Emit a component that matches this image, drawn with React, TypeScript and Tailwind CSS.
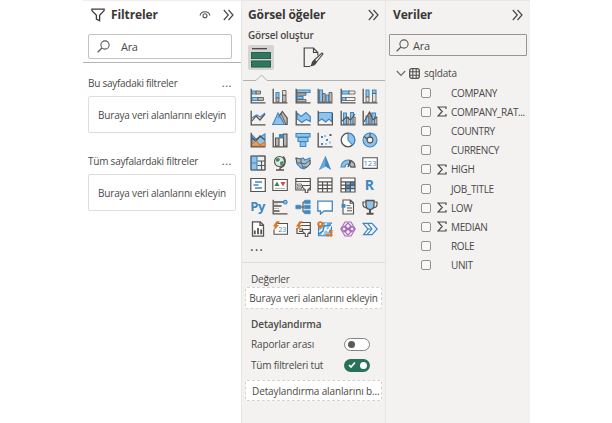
import type { ReactNode } from "react";

const K = "#55524f";
const B = "#3f87c0";
const L = "#8fc3ec";
const G = "#b9b7b4";
const O = "#d9782a";

function Icon({ children, w = 16, h = 16 }: { children: ReactNode; w?: number; h?: number }) {
  return (
    <svg width={w} height={h} viewBox={`0 0 ${w} ${h}`} fill="none" strokeWidth="1.1" className="shrink-0">
      {children}
    </svg>
  );
}

const Axes = () => <path d="M1.2 .8V14.8H15.5" stroke={K} strokeWidth="1.3" />;
const Table = ({ blue = false }: { blue?: boolean }) => (
  <>
    <path d="M1 1h14v14H1z" fill="#fff" />
    {blue && <path d="M5.5 5H15v6.5h-4V15H5.5z" fill={L} />}
    {blue && <path d="M10.5 5H15v3.5h-4.5zM5.5 8.5h5V12h-5z" fill={B} />}
    <path d="M1 1h14v14H1zM1 4.8h14M1 8.2h14M1 11.6h14M5.6 4.8V15M10.3 4.8V15" stroke={K} strokeWidth="1.2" />
  </>
);
const Bolt = () => <path d="M4.5.2 1 5.6h2L.8 10.5 7.2 4H4.8L8 .2z" fill={O} />;
const Funnel = () => <path d="M7.5 8.5h8v1.8L12.8 13v2.8h-2.5V13L7.5 10.3z" fill="#f3f2f1" stroke={K} />;

const visuals: ReactNode[] = [
  <><path d="M2 3h4v3H2zM2 9.5h6v3H2z" fill={L} stroke={B} /><path d="M6 3h4.5v3H6zM8 9.5h5.5v3H8z" fill={G} stroke={K} strokeWidth=".8" /><Axes /></>,
  <><path d="M4 4.5h3V10H4z" fill={L} stroke={B} /><path d="M4 10h3v4H4zM10.5 7h3.5v7h-3.5z" fill={G} stroke={K} strokeWidth=".8" /><path d="M10.5 2.5H14V7h-3.5z" fill="#e4e2e0" stroke={K} strokeWidth=".8" /><Axes /></>,
  <><path d="M2 2h13v2.5H2zM2 8.5h6V11H2z" fill={L} stroke={B} /><path d="M2 5h9v2.3H2zM2 11.5h9v2.3H2z" fill={G} stroke={K} strokeWidth=".8" /><Axes /></>,
  <><path d="M2.5 2h3v12h-3zM9 7h3v7H9z" fill={L} stroke={B} /><path d="M5.7 5.5h2.5V14H5.7zM12 4.5h3V14h-3z" fill={G} stroke={K} strokeWidth=".8" /><Axes /></>,
  <><path d="M2 3h7v3H2zM2 9.5h4v3H2z" fill={L} stroke={B} /><path d="M9 3h6v3H9zM6 9.5h9v3H6z" fill="#f3f2f1" stroke={K} strokeWidth=".8" /><Axes /></>,
  <><path d="M4 2h3v7H4zM10.5 2h3.5v3.5h-3.5z" fill={L} stroke={B} /><path d="M4 9h3v5H4zM10.5 5.5H14V14h-3.5z" fill="#e4e2e0" stroke={K} strokeWidth=".8" /><Axes /></>,

  <><path d="m2 11 4-5 4 4 5-6" stroke={K} strokeWidth="1.2" /><path d="m2 8 4.5-3 4 2L15 3" stroke={B} strokeWidth="1.2" /><Axes /></>,
  <><path d="m.8 14.5 9.5-13L15.2 8v6.5z" fill={G} stroke={K} /><path d="M.8 14.5 6 3l6.5 11.5z" fill={L} stroke={B} /><path d="m6 8 3-4.5 5 11" stroke={K} strokeWidth=".8" /></>,
  <><path d="m2 3 4 3.5 5-4 4.3 4v5l-4-2-4.5 3L2 8.8z" fill={L} stroke={B} /><Axes /></>,
  <><path d="M1.5 2.5H15V12l-3-3-3.5 3L5 9l-3.5 2z" fill={L} stroke={B} /><path d="M1.2.8v14h14.3V3" stroke={K} strokeWidth="1.2" /></>,
  <><path d="M3.5 3h3v11h-3zM10.5 2.5h3V14h-3z" fill={L} stroke={B} /><path d="M6.5 7h2.3v7H6.5zM13 7h2.2v7H13z" fill={G} stroke={K} strokeWidth=".7" /><path d="m2 11 4.5-4 4 3L15 4" stroke={K} /><Axes /></>,
  <><path d="M4 6h3v8H4zM10 3h3.5v11H10z" fill={L} stroke={B} /><path d="M7 3h2v11H7zM12.5 7h2.4v7h-2.4z" fill={G} stroke={K} strokeWidth=".7" /><path d="M2 12 7.5 2 11 10l4-3" stroke={K} /><Axes /></>,

  <><path d="m2 3 4 4 4-2 5-3v11H2z" fill={L} stroke={B} /><path d="m2 6 4 3 4-5 5 4" stroke={K} strokeWidth="1.6" /><path d="m2 12 4-3 4 4 5-3v4H2z" fill="#dfa467" stroke={O} /><Axes /></>,
  <><path d="M3.5 6H7v8H3.5zM11.5 2H15v12h-3.5z" fill={G} stroke={K} /><path d="M7.5 2.5H11V6H7.5z" fill={B} stroke={B} /><Axes /></>,
  <><path d="M1 1.5h14V5H1zM3 5.5h10v4H3zM5.2 9.8h5.6v4.7H5.2z" fill={L} stroke={B} /></>,
  <><path d="M4 4h2v2H4zM9 7h2v2H9zM4 11h2v2H4z" fill={B} /><path d="M7 3h2v2H7zM12 9.5h2v2h-2zM8 11h1.8v1.8H8z" fill={L} /><path d="M12.5 2h2v2h-2z" fill={K} /><Axes /></>,
  <><circle cx="8" cy="8" r="6.8" fill="#fff" stroke={K} strokeWidth="1.3" /><path d="M8 1.2A6.8 6.8 0 0 1 12.5 13L8 8z" fill={L} stroke={B} /></>,
  <><circle cx="8" cy="8" r="5" stroke={L} strokeWidth="4" /><circle cx="8" cy="8" r="7" stroke={B} /><circle cx="8" cy="8" r="2.9" stroke={K} /><path d="M2 4.5 5.5 7M8 .8V5" stroke={K} /></>,

  <><path d="M1 1h14v14H1z" fill="#e9f2fa" /><path d="M1 1h6v7H1zM1 8h6v7H1z" fill={L} stroke={B} /><path d="M7.5 1H15v14H7.5M7.5 6H15M7.5 10.5H15M11.5 6v9" stroke={K} /><path d="M1 1h14v14H1z" stroke={K} strokeWidth=".8" /></>,
  <><circle cx="7.5" cy="6.5" r="5" fill="#dfe9e2" stroke={K} /><path d="M4 3.5 7 3l1 2-2 1.8-2-.5zM8 7l3.5-1-1 4-2 .5z" fill="#3b8962" /><path d="M11 1.5A6.7 6.7 0 0 1 8 13v2M4 15h8" stroke={K} strokeWidth="1.3" /></>,
  <><path d="m1 3 4 1.2L8 3l2 2 5-2v6l-3 3-3 2-3-1-4-4z" fill={L} stroke={B} /><path d="m1 3 5 1v4l4 1 5-4v4l-3 3H8L6 8H2z" fill={G} stroke={K} strokeWidth=".9" /><path d="m2.5 9.5 4 3 4-1-2.5 2.7z" fill={B} /></>,
  <><path d="M8.5.8 14.2 15l-5.7-3.5L2 15z" fill={B} /><path d="m8.5.8-.3 10.7L2 15z" fill="#68a9dc" /></>,
  <><path d="M1 12a7 7 0 0 1 14 0h-4a3 3 0 0 0-6 0z" fill={L} stroke={B} /><path d="M10 5.3A7 7 0 0 1 15 12h-4L9.2 9.2z" fill={G} stroke={K} /><path d="m8 12 3-6" stroke={K} strokeWidth="1.5" /></>,
  <><path d="M.8 2.7h14.5v10.7H.8z" fill="#fff" stroke={K} /><text x="8" y="11" textAnchor="middle" fontSize="7.5" fontFamily="Open Sans" fill={B}>123</text></>,

  <><path d="M.8 1.5h14.5v13H.8z" fill="#fff" stroke={K} strokeWidth="1.2" /><path d="M5 5h7M3.5 8h5M5 11h7" stroke={B} strokeWidth="1.4" /></>,
  <><path d="M.8 2.5h14.5v11H.8z" fill="#fff" stroke={K} /><path d="M2.3 9 5 4.5 7.5 9z" fill="#39865b" /><path d="M8.5 5h5L11 9.5z" fill="#d04c43" /><path d="M3 11.5h10" stroke={G} /></>,
  <><path d="M.8 1.5h14.5V13H.8zM.8 4.5h14.5" fill="#f7f6f5" stroke={K} strokeWidth="1.2" /><path d="M2.5 7h4v1.8h-4zM2.5 10h4v1.8h-4z" stroke={K} strokeWidth=".7" /><Funnel /></>,
  <Table />,
  <Table blue />,
  <text x="7.4" y="13.1" textAnchor="middle" fontSize="14" fontWeight="700" fontFamily="Open Sans" fill={B}>R</text>,

  <text x="7.8" y="12" textAnchor="middle" fontSize="13" fontWeight="700" fontFamily="Open Sans" fill={B} textLength="15">Py</text>,
  <><path d="M2 3h10M2 7h7.5M2 12h5.5" stroke={K} strokeWidth="1.7" /><path d="M2 5h4M2 9.5h5" stroke={G} /><circle cx="13.3" cy="3.2" r="1.8" fill={L} stroke={B} /><Axes /></>,
  <><path d="M5 8h4M8 3v10M8 3h3M8 13h3" stroke={K} /><path d="M.8 6.2h5v3.6h-5zM9.5 1.2h5.7v3.4H9.5zM9.5 6.2h5.7v3.6H9.5zM9.5 11.4h5.7v3.4H9.5z" fill={B} stroke={B} strokeWidth=".6" /></>,
  <path d="M.8 2.2h14.5V12H7l-3.5 3V12H.8z" fill="#fff" stroke={B} strokeWidth="1.3" />,
  <><path d="M3 1h7.5l3 3v11H3zM10.2 1v3.3h3.3M7 9h5M7 11.7h5" fill="#f9f8f7" stroke={K} /><path d="M1.5 5h4v3.7h-4z" fill={B} /><path d="M6.5 6.6h4" stroke={B} /></>,
  <><path d="M3.8 3H1v2.8q0 2.6 4 3.1M12.2 3H15v2.8q0 2.6-4 3.1" stroke={K} strokeWidth="1.2" /><path d="M4 1.5h8v5q-.5 4-4 4t-4-4z" fill={L} stroke={K} strokeWidth="1.3" /><path d="M8 10v4.3M4.5 14.7h7" stroke={K} strokeWidth="2" /></>,

  <><path d="M2.5.8h7.8l3.2 3.3v11h-11zM10 .8v3.5h3.5" fill="#fff" stroke={K} strokeWidth="1.3" /><path d="M4.8 9.5v3.8M8 7v6.3M11.2 8.5v4.8" stroke={K} strokeWidth="1.8" /></>,
  <><path d="M4 2.5h11.5v10.8H2V9" fill="#fff" stroke={K} /><text x="10.3" y="11" textAnchor="middle" fontSize="7" fontFamily="Open Sans" fill={B}>23</text><Bolt /></>,
  <><path d="M5 1.5h10.3v11H2V7M5 4.5h10M4 8h4M4 10.3h4" fill="#f8f7f6" stroke={K} strokeWidth="1.2" /><Bolt /><Funnel /></>,
  <><path d="M1.5 2h13v12.7h-13z" fill={L} stroke={B} /><path d="m2 11 5-4 4 3 4-7M9 2v4l-4 8" stroke="#fff" strokeWidth="1.5" /><path d="m2 13 4-3 1-5 7-1" stroke={B} strokeWidth="1.5" /><path d="M3.3.2A3 3 0 0 1 6.4 3c0 2-1.2 3-3.1 5C1.3 6 .3 5 .3 3A3 3 0 0 1 3.3.2z" fill={O} /><circle cx="3.3" cy="3" r="1" fill="#fff" /><path d="M12 9h3.5v3H12zM9 13h3v2.5H9z" fill={O} /><circle cx="14" cy="14" r="1.7" fill={O} /></>,
  <><path d="M5 1h6l4.2 7L11 15H5L.8 8z" fill="#f6eff8" stroke="#a66ab8" /><path d="m8 2 3 3-3 3-3-3zM4 5.5 6.7 8 4 10.5 1.5 8zM12 5.5 14.6 8 12 10.5 9.5 8zM8 8l3 3-3 3-3-3z" stroke="#a66ab8" /></>,
  <><path d="M1 2.3h9L15.2 8 10 13.7H1.5L6 8z" fill="#eaf3fa" stroke={B} strokeWidth="1.2" /><path d="M6 8h4M5.5 2.3 10 8l-5 5.7" stroke={B} /></>,
];

const Chevrons = () => (
  <Icon w={11} h={12}>
    <path d="m.8 1 4.5 5-4.5 5M5.5 1 10 6l-4.5 5" stroke="#4b4947" strokeWidth="1.2" />
  </Icon>
);
const Search = () => (
  <Icon w={13} h={13}>
    <circle cx="8" cy="5" r="4.1" stroke="#5c5a58" />
    <path d="m5 8-4.4 4.3" stroke="#5c5a58" strokeWidth="1.2" />
  </Icon>
);

function FilterSection({ title, titleClass }: { title: string; titleClass: string }) {
  return (
    <section>
      <div className="flex h-5 items-center justify-between pr-[9px]">
        <span className={titleClass}>{title}</span>
        <span className="relative -top-px text-[11px] tracking-[0.5px]">...</span>
      </div>
      <div className="mt-[3px] flex h-[37px] w-[148px] items-center justify-center rounded-[2px] border border-[#dfdddb] text-[10px] tracking-[-0.19px]">
        Buraya veri alanlarını ekleyin
      </div>
    </section>
  );
}

const fields = [
  { name: "COMPANY" },
  { name: "COMPANY_RAT...", sum: true },
  { name: "COUNTRY" },
  { name: "CURRENCY" },
  { name: "HIGH", sum: true },
  { name: "JOB_TITLE" },
  { name: "LOW", sum: true },
  { name: "MEDIAN", sum: true },
  { name: "ROLE" },
  { name: "UNIT" },
];

export default function App() {
  return (
    <div className="flex h-[423px] w-[612px] overflow-hidden whitespace-nowrap bg-white pl-[83px] font-['Open_Sans',sans-serif] text-[10px] leading-none text-[#4b4947]">
      <aside className="w-[158px] shrink-0 border-t border-[#efeeed]">
        <header className="flex h-[27px] items-center pl-2 pr-[7px]">
          <Icon w={14} h={14}><path d="M.9 1.1h12.2v1.5L8.6 7.3v5.4L5.4 11V7.3L.9 2.6z" stroke="#3c3a38" strokeWidth="1.3" /></Icon>
          <h1 className="ml-[6px] flex-1 text-[12px] font-bold tracking-[-0.1px] text-[#393735]">Filtreler</h1>
          <Icon w={12} h={10}><path d="M1 5.5q1-3.7 5-3.7t5 3.7" stroke={K} /><circle cx="6" cy="5.8" r="2" stroke={K} /></Icon>
          <span className="ml-3"><Chevrons /></span>
        </header>
        <div className="ml-[5px] mt-[6px] flex h-[25px] w-[144px] items-center rounded-[2px] border border-[#c5c3c1] pl-2">
          <Search /><span className="ml-[11px] text-[11px] tracking-[-0.3px]">Ara</span>
        </div>
        <div className="mt-[3px] border-b border-[#b5b3b1]" />
        <div className="flex flex-col gap-[18px] pl-[5px] pt-[10px]">
          <FilterSection title="Bu sayfadaki filtreler" titleClass="tracking-[-0.27px]" />
          <FilterSection title="Tüm sayfalardaki filtreler" titleClass="tracking-[-0.22px]" />
        </div>
      </aside>

      <aside className="w-[145px] shrink-0 border-x border-t border-[#e8e6e4] bg-[#f3f2f1]">
        <header className="flex h-[27px] items-center pl-[6px] pr-[6px]">
          <h2 className="flex-1 text-[12px] font-bold tracking-[-0.12px] text-[#393735]">Görsel öğeler</h2>
          <Chevrons />
        </header>
        <div className="pl-[6px] pt-[2px] text-[10px] font-semibold tracking-[-0.21px]">Görsel oluştur</div>
        <div className="flex items-center pl-[6px] pt-[5px]">
          <div className="flex h-[25px] w-[26px] items-center justify-center rounded-[2px] bg-[#d6d4d2]">
            <Icon w={20} h={21}>
              <path d="M1 1.7h15" stroke="#3d3b39" strokeWidth="1.2" />
              <path d="M0 5h20v7H0zM0 13.5h20v7H0z" fill="#30775f" />
              <path d="M.5 5.5h19v6H.5zM.5 14h19v6H.5z" stroke="#204b3e" strokeDasharray="1 1" />
            </Icon>
          </div>
          <span className="ml-[29px]">
            <Icon w={21} h={21}>
              <path d="M7 19.5H1.2V1h9.3l4.3 4.5v3M10.5 1v4.5h4.3" fill="none" stroke="#494745" strokeWidth="1.2" />
              <path d="m20 7-6.5 8-2.2-2L19 6z" fill="#f3f2f1" stroke="#494745" />
              <path d="m11.2 12.8 2.6 2.2q-.7 4.2-7.3 4.5 2.2-1.8 2.2-3.7.4-2 2.5-3z" fill="#494745" />
            </Icon>
          </span>
        </div>
        <svg width="143" height="9" viewBox="0 0 143 9" className="mt-[3px] block"><path d="M1 7.5h13l5.5-5.5L25 7.5h118" fill="none" stroke="#b2b0ae" /></svg>
        <div className="mt-[6px] grid grid-cols-6 gap-x-[6.4px] gap-y-[6.2px] pl-[8px] pr-[7px]">
          {visuals.map((visual, i) => <Icon key={i}>{visual}</Icon>)}
        </div>
        <div className="h-[25px] pl-[8px] pt-[2px] text-[14px] leading-[14px] tracking-[1px]">...</div>
        <div className="border-t border-[#e0dedc] px-[3px] pt-2">
          <div className="flex h-4 items-center pl-[6px] tracking-[-0.2px]">Değerler</div>
          <div className="flex h-[22px] items-center justify-center rounded-[2px] border border-dashed border-[#d5d3d1] bg-white tracking-[-0.17px]">Buraya veri alanlarını ekleyin</div>
          <div className="mt-[7px] flex h-4 items-center pl-[6px] font-semibold tracking-[-0.1px]">Detaylandırma</div>
          <div className="mt-1 flex h-4 items-center justify-between pl-[6px] pr-[12px] tracking-[-0.15px]">
            Raporlar arası
            <div className="flex h-[13px] w-[26px] items-center rounded-full border border-[#858381] bg-white pl-[3px]"><div className="size-[7px] rounded-full bg-[#5d5b59]" /></div>
          </div>
          <div className="mt-[5px] flex h-4 items-center justify-between pl-[6px] pr-[12px] tracking-[-0.2px]">
            Tüm filtreleri tut
            <div className="flex h-[13px] w-[26px] items-center justify-between rounded-full bg-[#287059] pl-1 pr-[3px]">
              <Icon w={8} h={8}><path d="m1 4 2 2 4-4.5" stroke="#fff" strokeWidth="1.7" /></Icon>
              <div className="size-[7px] rounded-full bg-white" />
            </div>
          </div>
          <div className="mt-[7px] flex h-[21px] items-center rounded-[2px] border border-dashed border-[#d5d3d1] bg-white pl-[6px] tracking-[-0.12px]">Detaylandırma alanlarını b...</div>
        </div>
      </aside>

      <aside className="w-[144px] shrink-0 border-t border-[#e8e6e4] bg-[#f3f2f1]">
        <header className="flex h-[27px] items-center pl-[7px] pr-[7px]">
          <h2 className="flex-1 text-[12px] font-bold tracking-[-0.15px] text-[#393735]">Veriler</h2>
          <Chevrons />
        </header>
        <div className="ml-[3px] mt-[6px] flex h-[22px] w-[138px] items-center rounded-[1px] border border-[#979593] pl-[6px]">
          <Search /><span className="ml-[4px] text-[11px] tracking-[-0.2px]">Ara</span>
        </div>
        <div className="mt-[7px] flex h-5 items-center pl-[10px]">
          <Icon w={10} h={7}><path d="m.8 1 4.2 4.5L9.2 1" stroke="#6b6967" /></Icon>
          <span className="ml-[3px]"><Icon w={11} h={11}><rect x=".7" y=".7" width="9.6" height="9.6" rx="2" stroke={K} strokeWidth="1.3" /><path d="M3.8 1v9M7.2 1v9M1 3.8h9M1 7.2h9" stroke={K} /></Icon></span>
          <span className="ml-1 tracking-[-0.2px]">sqldata</span>
        </div>
        <div>
          {fields.map(({ name, sum }) => (
            <div key={name} className="flex h-[19.2px] items-center pl-[35px]">
              <div className="size-[10px] rounded-[2px] border border-[#939190] bg-[#f9f8f7]" />
              <div className="ml-[6px] w-[14px]">
                {sum && <Icon w={10} h={11}><path d="M9 3V1H1l4.2 4.5L1 10h8V8" stroke="#4b4947" strokeWidth="1.2" /></Icon>}
              </div>
              <span className="text-[10px] tracking-[-0.35px]">{name}</span>
            </div>
          ))}
        </div>
      </aside>
    </div>
  );
}
